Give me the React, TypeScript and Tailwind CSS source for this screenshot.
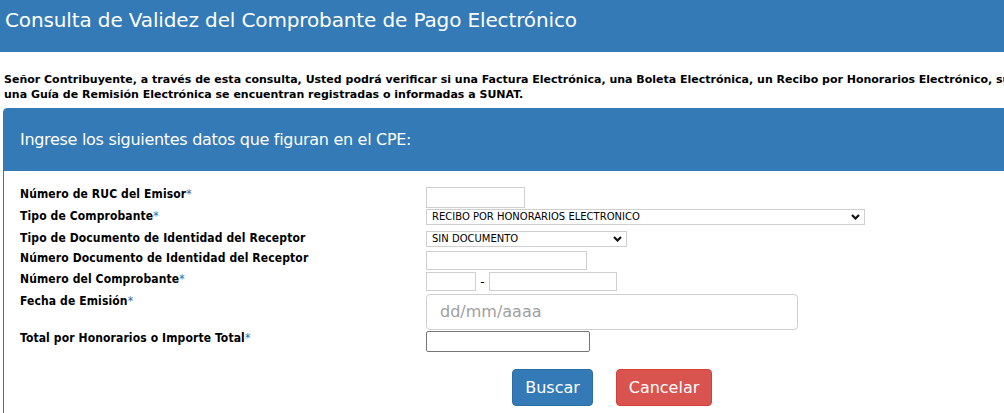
import React from 'react';

const cond = { fontFamily: '"DejaVu Sans Condensed", "DejaVu Sans", sans-serif' };
const reg = { fontFamily: '"DejaVu Sans", sans-serif' };

const Req = () => <span className="font-normal text-[#2a6aa8]">*</span>;

const rows = [
  { label: 'Número de RUC del Emisor', req: true, h: 'h-[22px]' },
  { label: 'Tipo de Comprobante', req: true, h: 'h-[22px]' },
  { label: 'Tipo de Documento de Identidad del Receptor', req: false, h: 'h-[20px]' },
  { label: 'Número Documento de Identidad del Receptor', req: false, h: 'h-[21px]' },
  { label: 'Número del Comprobante', req: true, h: 'h-[22px]' },
  { label: 'Fecha de Emisión', req: true, h: 'h-[37px]' },
  { label: 'Total por Honorarios o Importe Total', req: true, h: 'h-[21px]' },
];

const Chevron = () => (
  <svg width="9" height="6" viewBox="0 0 9 6" className="shrink-0">
    <path d="M1 1 L4.5 4.5 L8 1" fill="none" stroke="#111" strokeWidth="2.2" />
  </svg>
);

const SelectBox = ({ text, w }: { text: string; w: string }) => (
  <div className={`${w} h-[16px] border border-[#cfcfcf] flex items-center justify-between pl-[5px] pr-[4px]`}>
    <span className="text-[10px] text-black leading-none" style={reg}>{text}</span>
    <Chevron />
  </div>
);

const Control = ({ i }: { i: number }) => {
  switch (i) {
    case 0:
      return <div className="w-[99px] h-[21px] border border-[#cfcfcf]" />;
    case 1:
      return <SelectBox text="RECIBO POR HONORARIOS ELECTRONICO" w="w-[439px]" />;
    case 2:
      return <SelectBox text="SIN DOCUMENTO" w="w-[201px]" />;
    case 3:
      return <div className="w-[161px] h-[19px] border border-[#cfcfcf]" />;
    case 4:
      return (
        <div className="flex items-center">
          <div className="w-[50px] h-[19px] border border-[#cfcfcf]" />
          <span className="w-[13px] text-center text-[12px] leading-none">-</span>
          <div className="w-[128px] h-[19px] border border-[#cfcfcf]" />
        </div>
      );
    case 5:
      return (
        <div className="w-[372px] h-[36px] border border-[#cfcfcf] rounded-[4px] flex items-center pl-[13px]">
          <span className="text-[16px] text-[#a0a0a0]" style={reg}>dd/mm/aaaa</span>
        </div>
      );
    default:
      return <div className="w-[164px] h-[21px] border border-[#767676] rounded-[2px]" />;
  }
};

export default function App() {
  return (
    <div className="w-[1004px] h-[413px] overflow-hidden bg-white" style={reg}>
      <div className="w-[1170px]">
        <div className="h-[52px] bg-[#337ab7] pl-[5px] pt-[6px]">
          <h1 className="text-[20px] leading-[28px] tracking-[-0.13px] text-white font-normal">
            Consulta de Validez del Comprobante de Pago Electrónico
          </h1>
        </div>

        <div className="pt-[20px] pl-[4px] text-[11px] leading-[15px] font-bold text-black">
          <p className="whitespace-nowrap">
            Señor Contribuyente, a través de esta consulta, Usted podrá verificar si una Factura Electrónica, una Boleta Electrónica, un Recibo por Honorarios Electrónico, sus Notas de Crédito y Débito
          </p>
          <p className="whitespace-nowrap">una Guía de Remisión Electrónica se encuentran registradas o informadas a SUNAT.</p>
        </div>

        <div className="ml-[3px] mt-[6px] border border-[#337ab7] rounded-t-[4px] h-[320px]">
          <div className="h-[62px] bg-[#337ab7] flex items-center pl-[16px]">
            <span className="text-[16px] tracking-[-0.3px] text-white">Ingrese los siguientes datos que figuran en el CPE:</span>
          </div>

          <div className="pl-[16px] pt-[16px]">
            {rows.map((r, i) => (
              <div key={i} className={`flex items-start ${r.h}`}>
                <div className="w-[406px] text-[12px] leading-[14px] tracking-[0.12px] font-bold text-black" style={cond}>
                  {r.label}
                  {r.req && <Req />}
                </div>
                <Control i={i} />
              </div>
            ))}

            <div className="flex pl-[492px] gap-[23px] mt-[17px]">
              <button className="h-[37px] w-[81px] rounded-[4px] bg-[#337ab7] border border-[#2e6da4] text-white text-[16px]">
                Buscar
              </button>
              <button className="h-[37px] w-[96px] rounded-[4px] bg-[#d9534f] border border-[#d43f3a] text-white text-[16px]">
                Cancelar
              </button>
            </div>
          </div>
        </div>
      </div>
    </div>
  );
}
